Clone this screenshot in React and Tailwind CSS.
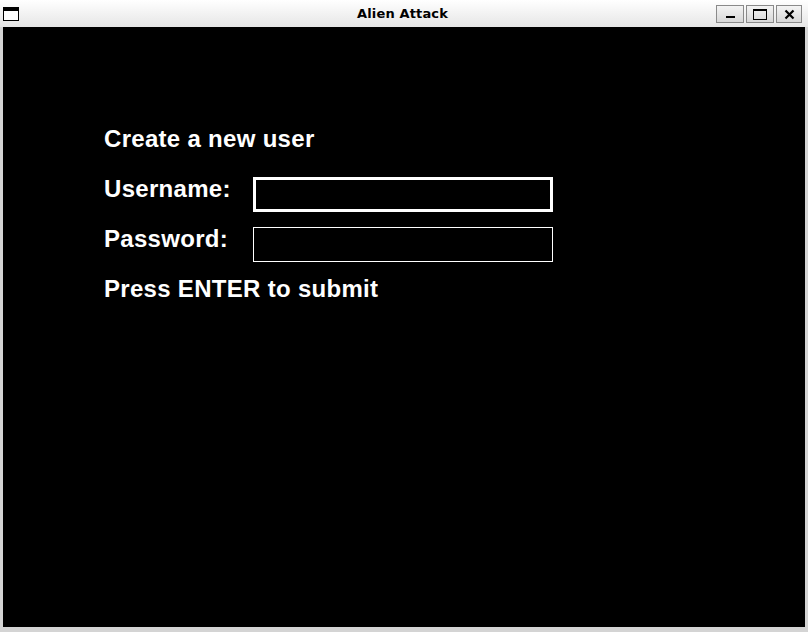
export default function App() {
  const font = { fontFamily: '"Liberation Sans", Arial, sans-serif' };
  return (
    <div className="w-[808px] h-[632px] bg-[#d4d4d4] flex flex-col overflow-hidden">
      <div className="h-[27px] relative flex items-center justify-center bg-gradient-to-b from-white to-[#e6e6e6]">
        <div className="absolute left-[3px] top-[7px] w-[16px] h-[14px] border border-black bg-white flex flex-col">
          <div className="h-[3px] bg-black" />
        </div>
        <span className="text-[13px] font-bold text-black tracking-[0.15px] pr-[3px]" style={{ fontFamily: '"DejaVu Sans", sans-serif' }}>Alien Attack</span>
        <div className="absolute right-[6px] top-[5px] flex gap-[2px]">
          <div className="w-[28px] h-[18px] border border-[#8a8a8a] bg-gradient-to-b from-[#f4f4f4] to-[#d8d8d8] flex items-end justify-center pb-[4px]">
            <div className="w-[9px] h-[2px] bg-black" />
          </div>
          <div className="w-[28px] h-[18px] border border-[#8a8a8a] bg-gradient-to-b from-[#f4f4f4] to-[#d8d8d8] flex items-center justify-center">
            <div className="w-[14px] h-[11px] border border-black border-t-[2px]" />
          </div>
          <div className="w-[26px] h-[18px] border border-[#8a8a8a] bg-gradient-to-b from-[#f4f4f4] to-[#d8d8d8] flex items-center justify-center">
            <svg width="11" height="11" viewBox="0 0 11 11">
              <path d="M1.5 1.5 L9.5 9.5 M9.5 1.5 L1.5 9.5" stroke="black" strokeWidth="2.2" />
            </svg>
          </div>
        </div>
      </div>
      <div className="mx-[3px] h-[600px] bg-black text-white font-bold pl-[101px] pt-[100px] tracking-[0.3px]" style={font}>
        <div className="text-[24px] leading-[24px] h-[24px]">Create a new user</div>
        <div className="flex mt-[26px] h-[35px]">
          <div className="w-[149px] text-[24px] leading-[24px]">Username:</div>
          <div className="w-[300px] h-[35px] border-[3px] border-white" />
        </div>
        <div className="flex mt-[15px] h-[35px]">
          <div className="w-[149px] text-[24px] leading-[24px]">Password:</div>
          <div className="w-[300px] h-[35px] border border-white" />
        </div>
        <div className="text-[24px] leading-[24px] mt-[15px]">Press ENTER to submit</div>
      </div>
    </div>
  );
}
